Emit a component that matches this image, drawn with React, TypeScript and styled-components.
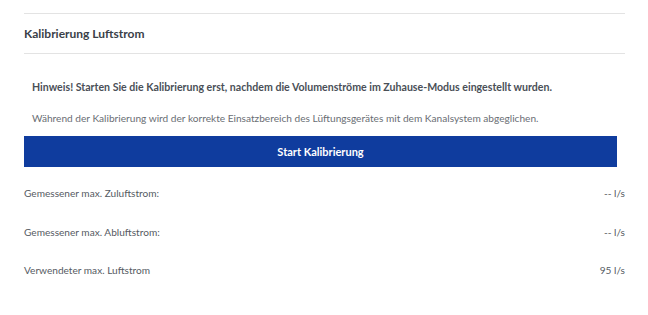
import React from 'react';
import styled, { createGlobalStyle } from 'styled-components';

const GlobalStyle = createGlobalStyle`
  body {
    margin: 0;
    background: #ffffff;
    font-family: Lato, "Noto Sans", sans-serif;
  }
`;

const StyledPanel = styled.div`
  display: flex;
  flex-direction: column;
  width: 601px;
  padding: 13px 0 0 24px;
  color: #555a62;

  .heading {
    display: flex;
    align-items: center;
    height: 39px;
    border-top: 1px solid #e3e3e3;
    border-bottom: 1px solid #e3e3e3;

    h2 {
      margin: 0;
      font-weight: bold;
      font-size: 12px;
      color: #3a3f48;
    }
  }

  .notice {
    margin: 26px 0 0 8px;
    font-weight: bold;
    font-size: 10.6px;
    line-height: 14px;
    color: #4a4f57;
  }

  .description {
    margin: 17px 0 0 8px;
    font-size: 10.15px;
    line-height: 14px;
    color: #6a6e74;
  }
`;

const StartButton = styled.button`
  width: 593px;
  height: 31px;
  margin-top: 11px;
  border: none;
  background: #0f3c9e;
  color: #ffffff;
  font-family: inherit;
  font-weight: bold;
  font-size: 11px;
  cursor: pointer;
`;

const ValueList = styled.div`
  display: flex;
  flex-direction: column;
  margin-top: 7px;
`;

const ValueRow = styled.div`
  display: flex;
  justify-content: space-between;
  align-items: center;
  height: 38.5px;
  font-size: 10.1px;
  color: #555a62;
`;

const rows = [
  { label: 'Gemessener max. Zuluftstrom:', value: '-- l/s' },
  { label: 'Gemessener max. Abluftstrom:', value: '-- l/s' },
  { label: 'Verwendeter max. Luftstrom', value: '95 l/s' },
];

const App = () => {
  return (
    <>
      <GlobalStyle />
      <StyledPanel>
        <div className="heading">
          <h2>Kalibrierung Luftstrom</h2>
        </div>

        <p className="notice">
          Hinweis! Starten Sie die Kalibrierung erst, nachdem die Volumenströme im Zuhause-Modus eingestellt wurden.
        </p>
        <p className="description">
          Während der Kalibrierung wird der korrekte Einsatzbereich des Lüftungsgerätes mit dem Kanalsystem abgeglichen.
        </p>

        <StartButton>Start Kalibrierung</StartButton>

        <ValueList>
          {rows.map((row) => (
            <ValueRow key={row.label}>
              <span>{row.label}</span>
              <span>{row.value}</span>
            </ValueRow>
          ))}
        </ValueList>
      </StyledPanel>
    </>
  );
};

export default App;
